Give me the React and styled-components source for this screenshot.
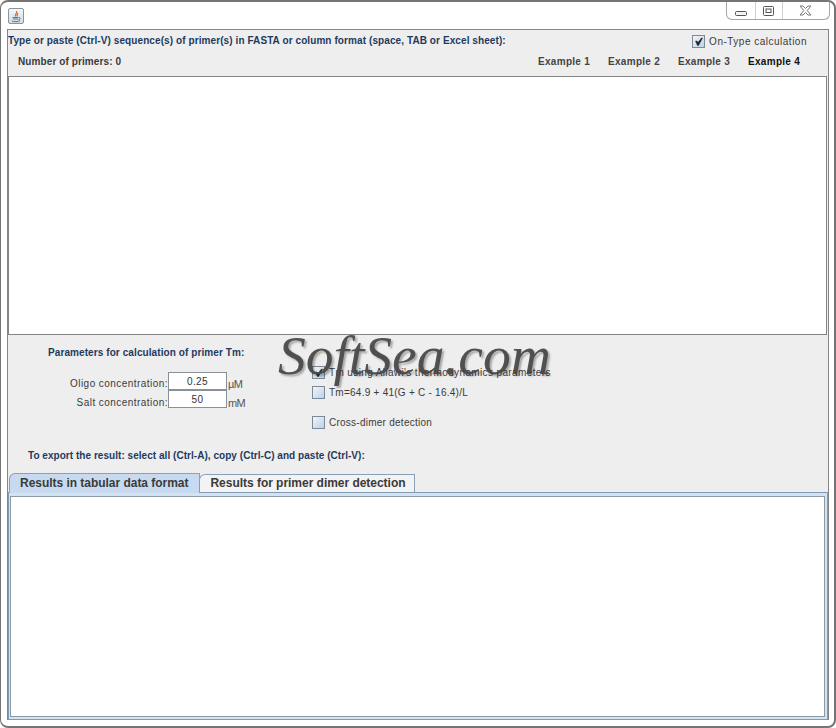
import React from "react";
import styled, { createGlobalStyle } from "styled-components";

const Global = createGlobalStyle`
  html, body { margin: 0; padding: 0; background: #fff; }
  #root { width: 836px; height: 728px; overflow: hidden; }
`;

const Frame = styled.div`
  position: relative;
  box-sizing: border-box;
  width: 836px;
  height: 728px;
  background: #fff;
  border: 2px solid #757575;
  border-left-width: 1px;
  border-radius: 8px;
  font-family: "Liberation Sans", Arial, sans-serif;
  display: flex;
  flex-direction: column;
`;

const TitleBar = styled.div`
  height: 27px;
  flex: none;
  display: flex;
  justify-content: space-between;
  align-items: flex-start;
  padding: 0 4px 0 7px;
`;

const AppIcon = styled.div`
  box-sizing: border-box;
  width: 16px;
  height: 16px;
  margin-top: 6px;
  border: 1px solid #8a949e;
  border-radius: 2px;
  background: linear-gradient(#f4f6f8, #d5dbe2);
  display: flex;
  align-items: center;
  justify-content: center;
`;

const WindowButtons = styled.div`
  display: flex;
  height: 18px;
  width: 104px;
  border: 1px solid #a5a5a5;
  border-top: 0;
  border-radius: 0 0 6px 6px;
  box-sizing: border-box;
`;

const WinBtn = styled.div`
  flex: ${(p) => p.$flex};
  display: flex;
  align-items: ${(p) => (p.$low ? "flex-end" : "center")};
  padding-bottom: ${(p) => (p.$low ? 3 : 0)}px;
  justify-content: center;
  border-left: ${(p) => (p.$first ? "0" : "1px solid #d0d0d0")};
`;

const Body = styled.div`
  flex: 1;
  margin: 0 5px 6px 6px;
  background: #eeeeee;
  border: 1px solid #858585;
  border-bottom: 0;
  display: flex;
  flex-direction: column;
  min-height: 0;
`;

const Header = styled.div`
  height: 46px;
  flex: none;
  display: flex;
  flex-direction: column;
`;

const HeaderRow = styled.div`
  height: ${(p) => p.$h}px;
  padding: ${(p) => p.$pad};
  display: flex;
  align-items: center;
  justify-content: space-between;
`;

const Heading = styled.span`
  display: block;
  color: #1f3a5f;
  font-size: 10px;
  line-height: 12px;
  font-weight: bold;
  letter-spacing: 0.09px;
  white-space: nowrap;
`;

const Count = styled.span`
  color: #3b3b3b;
  font-size: 10px;
  font-weight: bold;
  letter-spacing: 0.1px;
`;

const Examples = styled.div`
  display: flex;
  gap: 18px;
`;

const Example = styled.span`
  width: 52px;
  color: ${(p) => (p.$active ? "#111" : "#444")};
  font-size: 10px;
  font-weight: bold;
  letter-spacing: 0.3px;
  white-space: nowrap;
`;

const Check = styled.span`
  width: 13px;
  height: 13px;
  flex: none;
  box-sizing: border-box;
  border: 1px solid #7a8a99;
  background: linear-gradient(135deg, #f2f6fa, #bcd0e4);
  display: inline-flex;
  align-items: center;
  justify-content: center;
`;

const CheckLabel = styled.label`
  display: flex;
  align-items: center;
  gap: 4px;
  color: #3a3a3a;
  font-size: 10px;
  letter-spacing: 0.25px;
  white-space: nowrap;
`;

const OnType = styled(CheckLabel)`
  margin-right: 21px;
  letter-spacing: 0.5px;
`;

const SequenceArea = styled.div`
  height: 257px;
  flex: none;
  margin-right: 1px;
  background: #fff;
  border: 1px solid #858585;
`;

const Params = styled.div`
  height: 138px;
  flex: none;
  box-sizing: border-box;
  padding-top: 12px;
  display: flex;
  flex-direction: column;
`;

const ParamColumns = styled.div`
  display: flex;
  height: 103px;
  flex: none;
`;

const LeftCol = styled.div`
  width: 304px;
  flex: none;
  padding-left: 40px;
  box-sizing: border-box;
`;

const Fields = styled.div`
  margin-top: 13px;
  display: flex;
  flex-direction: column;
`;

const FieldRow = styled.div`
  display: flex;
  align-items: center;
  height: 18px;
`;

const FieldLabel = styled.span`
  width: 120px;
  flex: none;
  box-sizing: border-box;
  padding-top: ${(p) => p.$drop}px;
  text-align: right;
  color: #3a3a3a;
  font-size: 10px;
  letter-spacing: 0.45px;
  white-space: nowrap;
`;

const Input = styled.div`
  width: 59px;
  height: 18px;
  flex: none;
  box-sizing: border-box;
  background: #fff;
  border: 1px solid #8a9098;
  font-size: 10px;
  letter-spacing: 0.4px;
  color: #333;
  text-align: center;
  line-height: 17px;
`;

const Unit = styled.span`
  color: #555;
  font-size: 11px;
  letter-spacing: -0.7px;
  margin-left: 1px;
  padding-top: ${(p) => p.$drop + 1}px;
`;

const RightCol = styled.div`
  padding-top: 18px;
  display: flex;
  flex-direction: column;
`;

const OptionRow = styled(CheckLabel)`
  height: 14px;
  margin-bottom: ${(p) => p.$mb}px;
  letter-spacing: ${(p) => p.$track || 0.25}px;
`;

const ExportNote = styled(Heading)`
  margin-left: 20px;
  letter-spacing: 0.04px;
`;

const TabBar = styled.div`
  height: 19px;
  flex: none;
  padding-left: 1px;
  display: flex;
  align-items: flex-start;
  position: relative;
  z-index: 1;
`;

const Tab = styled.div`
  box-sizing: border-box;
  height: ${(p) => (p.$active ? 20 : 18)}px;
  margin-top: ${(p) => (p.$active ? 0 : 1)}px;
  margin-left: ${(p) => (p.$active ? 0 : -1)}px;
  padding: 0 ${(p) => (p.$active ? 11 : 8)}px 0 10px;
  border: 1px solid #8aa0b8;
  border-bottom: 0;
  border-radius: 6px 0 0 0;
  background: ${(p) => (p.$active ? "#c8daef" : "#f3f3f3")};
  color: #3a3a3a;
  font-size: 12px;
  font-weight: bold;
  letter-spacing: -0.03px;
  line-height: ${(p) => (p.$active ? 19 : 17)}px;
  white-space: nowrap;
`;

const TabPane = styled.div`
  flex: 1;
  min-height: 0;
  box-sizing: border-box;
  background: #d3e3f2;
  border: 1px solid #7f9bb5;
  padding: 3px 1px 2px 1px;
  display: flex;
`;

const ResultArea = styled.div`
  flex: 1;
  margin-right: 1px;
  background: #fff;
  border: 1px solid #8c9aa6;
`;

const Watermark = styled.div`
  position: absolute;
  left: 277px;
  top: 322px;
  font-family: "Liberation Serif", serif;
  font-style: italic;
  font-size: 55.5px;
  line-height: 64px;
  color: rgba(72, 72, 72, 0.94);
  text-shadow: 2px 2px 2px rgba(0, 0, 0, 0.3);
  white-space: nowrap;
  pointer-events: none;
`;

const Tick = () => (
  <svg width="11" height="11" viewBox="0 0 11 11">
    <path d="M2.5 5 L4.5 9.5 L5.5 9.5 L9.5 2 L8.5 2 L5 6.5 L4 5 Z" fill="#222" stroke="#222" strokeWidth="0.5" />
  </svg>
);

const JavaGlyph = () => (
  <svg width="12" height="13" viewBox="0 0 12 13">
    <path d="M6.5 1 C8 3 4 4 5.5 6.5 M8 3 C6.5 4.5 6.5 5 7.5 6.5" fill="none" stroke="#d9641e" strokeWidth="1.1" />
    <path d="M2.5 7.5 H8.5 M3 9 H8 M2 11 C4 12 8 12 10 10.5 M9 7.5 C11 7.5 10.5 9.5 8.5 9.5" fill="none" stroke="#3a6ea5" strokeWidth="0.9" />
  </svg>
);

const MinIcon = () => (
  <svg width="12" height="5" viewBox="0 0 12 5">
    <rect x="0.5" y="0.5" width="11" height="4" rx="1" fill="#f4f4f4" stroke="#555" />
  </svg>
);

const MaxIcon = () => (
  <svg width="11" height="10" viewBox="0 0 11 10">
    <rect x="0.5" y="0.5" width="10" height="9" rx="1" fill="#fff" stroke="#555" />
    <rect x="3" y="3" width="5" height="3.5" fill="#fff" stroke="#555" />
  </svg>
);

const CloseIcon = () => (
  <svg width="13" height="11" viewBox="0 0 13 11">
    <path d="M1 1 H4 L6.5 3.5 L9 1 H12 L8.2 5.5 L12 10 H9 L6.5 7.5 L4 10 H1 L4.8 5.5 Z" fill="#fff" stroke="#777" strokeWidth="1" />
  </svg>
);

export default function App() {
  return (
    <>
      <Global />
      <Frame>
        <TitleBar>
          <AppIcon><JavaGlyph /></AppIcon>
          <WindowButtons>
            <WinBtn $flex="29" $first $low><MinIcon /></WinBtn>
            <WinBtn $flex="27"><MaxIcon /></WinBtn>
            <WinBtn $flex="48"><CloseIcon /></WinBtn>
          </WindowButtons>
        </TitleBar>
        <Body>
          <Header>
            <HeaderRow $h={22} $pad="0">
              <Heading>Type or paste (Ctrl-V) sequence(s) of primer(s) in FASTA or column format (space, TAB or Excel sheet):</Heading>
              <OnType><Check><Tick /></Check>On-Type calculation</OnType>
            </HeaderRow>
            <HeaderRow $h={18} $pad="0 28px 0 10px">
              <Count>Number of primers: 0</Count>
              <Examples>
                <Example>Example 1</Example>
                <Example>Example 2</Example>
                <Example>Example 3</Example>
                <Example $active>Example 4</Example>
              </Examples>
            </HeaderRow>
          </Header>
          <SequenceArea />
          <Params>
            <ParamColumns>
              <LeftCol>
                <Heading>Parameters for calculation of primer Tm:</Heading>
                <Fields>
                  <FieldRow>
                    <FieldLabel $drop={5}>Oligo concentration:</FieldLabel>
                    <Input>0.25</Input>
                    <Unit $drop={5}>µM</Unit>
                  </FieldRow>
                  <FieldRow>
                    <FieldLabel $drop={7}>Salt concentration:</FieldLabel>
                    <Input>50</Input>
                    <Unit $drop={7}>mM</Unit>
                  </FieldRow>
                </Fields>
              </LeftCol>
              <RightCol>
                <OptionRow $mb={6} $track={0.37}><Check><Tick /></Check>Tm using Allawi's thermodynamics parameters</OptionRow>
                <OptionRow $mb={16}><Check />Tm=64.9 + 41(G + C - 16.4)/L</OptionRow>
                <OptionRow $mb={0}><Check />Cross-dimer detection</OptionRow>
              </RightCol>
            </ParamColumns>
            <ExportNote>To export the result: select all (Ctrl-A), copy (Ctrl-C) and paste (Ctrl-V):</ExportNote>
          </Params>
          <TabBar>
            <Tab $active>Results in tabular data format</Tab>
            <Tab>Results for primer dimer detection</Tab>
          </TabBar>
          <TabPane><ResultArea /></TabPane>
        </Body>
        <Watermark>SoftSea.com</Watermark>
      </Frame>
    </>
  );
}
